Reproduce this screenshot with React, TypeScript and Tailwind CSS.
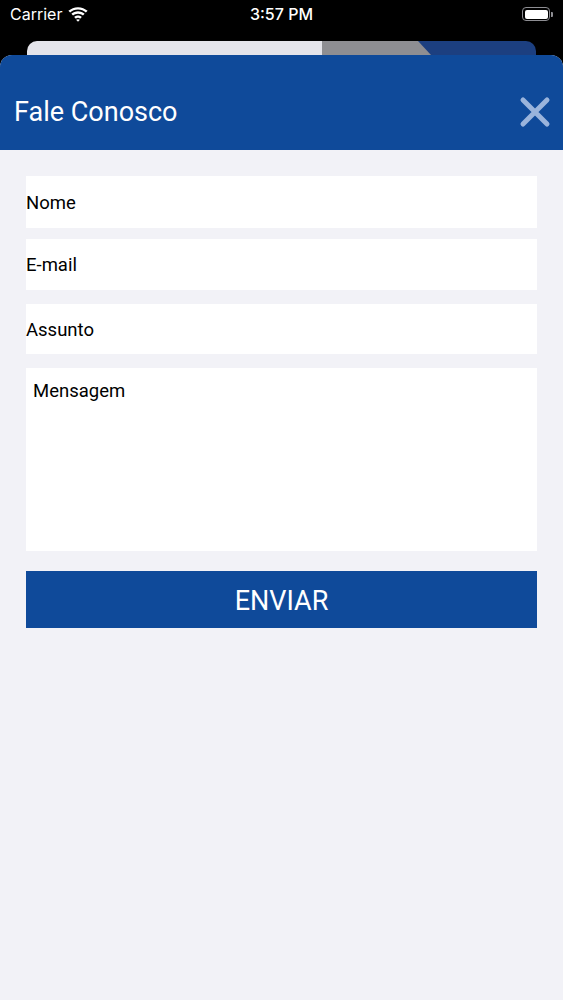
import React from "react";

export default function App() {
  return (
    <div className="w-[563px] h-[1000px] bg-black flex flex-col overflow-hidden" style={{ fontFamily: "Roboto, 'Liberation Sans', sans-serif" }}>
      {/* Status bar */}
      <div className="h-[41px] flex items-start justify-between px-[10px] pt-[4px] text-white relative" style={{ fontFamily: "Inter, 'Liberation Sans', sans-serif" }}>
        <div className="flex items-center gap-[6px] text-[16px] leading-[20px]">
          <span>Carrier</span>
          <svg width="20" height="15" viewBox="0 0 19 14" fill="white">
            <path d="M9.5 2.2c2.9 0 5.5 1.1 7.5 3l1.6-1.7C16.2 1.3 13 0 9.5 0S2.8 1.3.4 3.5L2 5.2c2-1.9 4.6-3 7.5-3z" />
            <path d="M9.5 6.2c1.8 0 3.4.7 4.7 1.8l1.6-1.7C14.1 4.8 11.9 3.9 9.5 3.9S4.9 4.8 3.2 6.3L4.8 8c1.3-1.1 2.9-1.8 4.7-1.8z" />
            <path d="M9.5 10.2c.8 0 1.5.3 2 .8l1.6-1.7c-1-.9-2.200-1.4-3.6-1.4S6.9 8.4 5.9 9.3L7.5 11c.5-.5 1.2-.8 2-.8z" />
            <path d="M9.5 14l1.8-1.9c-.5-.4-1.1-.6-1.8-.6s-1.3.2-1.8.6z" />
          </svg>
        </div>
        <div className="absolute left-0 right-0 top-[4px] text-center text-[16px] leading-[20px] font-medium">3:57 PM</div>
        <div className="flex items-center mt-[3px]">
          <div className="w-[28px] h-[14px] rounded-[4px] border border-[#8e8e93] p-[1.5px]">
            <div className="w-full h-full bg-white rounded-[2px]" />
          </div>
          <div className="w-[2px] h-[5px] bg-[#8e8e93] rounded-r-[1px] ml-[1px]" />
        </div>
      </div>

      {/* Background card peek */}
      <div className="h-[14px] mx-[27px] rounded-t-[10px] overflow-hidden flex">
        <div className="w-[295px] bg-[#e4e4ea]" />
        <svg width="214" height="14" viewBox="0 0 214 14" preserveAspectRatio="none" className="block">
          <rect width="214" height="14" fill="#1c3f80" />
          <polygon points="0,0 96,0 109,14 0,14" fill="#8e8e92" />
        </svg>
      </div>

      {/* Sheet */}
      <div className="flex-1 rounded-t-[12px] overflow-hidden bg-[#f2f2f7] flex flex-col">
        <div className="h-[95px] bg-[#0f4a9a] flex items-center justify-between pl-[14px] pr-[12px] pt-[19px]">
          <span className="text-white text-[27px] leading-[32px]">Fale Conosco</span>
          <svg width="32" height="32" viewBox="0 0 32 32" className="-mt-[1px]">
            <path d="M4 4 L28 28 M28 4 L4 28" stroke="#9ab4dc" strokeWidth="5" strokeLinecap="round" />
          </svg>
        </div>

        <div className="px-[26px] pt-[26px] flex flex-col">
          <div className="h-[52px] bg-white flex items-center pt-[3px] text-[18.5px] text-black">Nome</div>
          <div className="h-[51px] mt-[11px] bg-white flex items-center pt-[3px] text-[18.5px] text-black">E-mail</div>
          <div className="h-[50px] mt-[14px] bg-white flex items-center pt-[3px] text-[18.5px] text-black">Assunto</div>
          <div className="h-[183px] mt-[14px] bg-white pl-[7px] pt-[11px] text-[18.5px] text-black leading-[24px]">Mensagem</div>
          <div className="h-[57px] mt-[20px] bg-[#0f4a9a] flex items-center justify-center pt-[3px] text-white text-[27px]">ENVIAR</div>
        </div>
      </div>
    </div>
  );
}
